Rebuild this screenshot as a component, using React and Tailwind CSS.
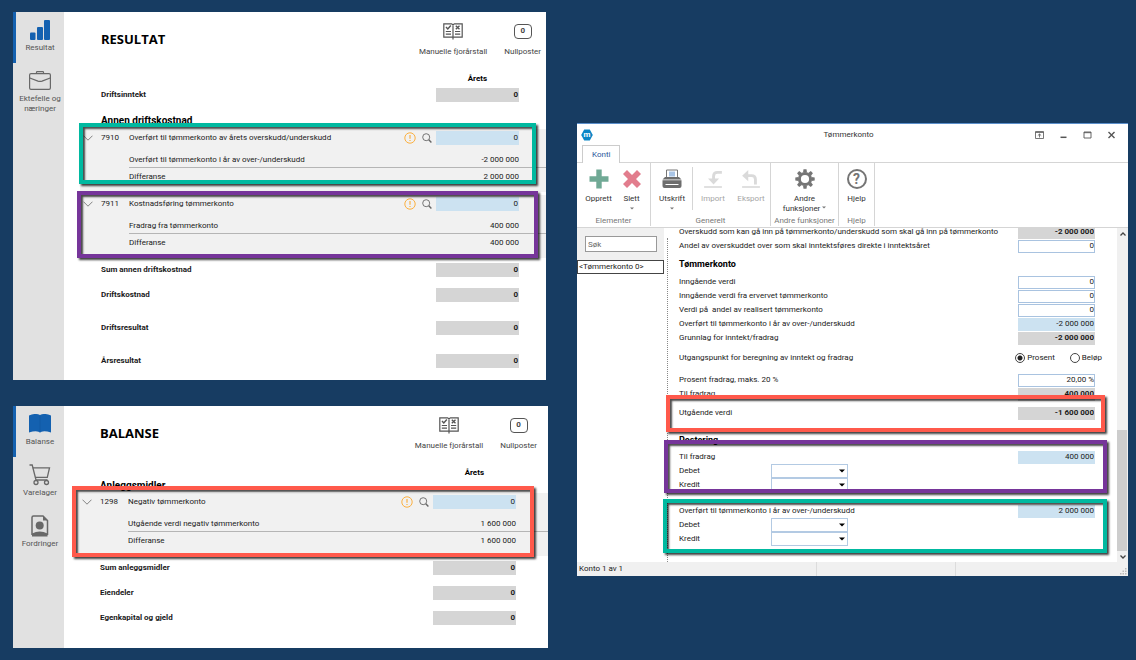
import React, { useState } from 'react';

const frameColors = {
  green: 'border-[#00b9a0]',
  purple: 'border-[#76359a]',
  red: 'border-[#ff594b]',
};

// Highlight rectangle drawn on top of a group of rows
function Frame({ color, className }) {
  return (
    <div
      className={`absolute z-10 border-4 pointer-events-none shadow-[2px_2px_2px_rgba(0,0,0,0.75),inset_2px_2px_2px_rgba(0,0,0,0.7)] ${frameColors[color]} ${className}`}
    ></div>
  );
}

/* ---------- icons ---------- */

function BarsIcon() {
  return (
    <svg viewBox="0 0 20 20" className="w-5 h-5" fill="#1461b0">
      <rect x="0" y="12.500" width="5.500" height="7.500" rx="1" />
      <rect x="7" y="7" width="6" height="13" rx="1" />
      <rect x="14" y="0" width="6" height="20" rx="1" />
    </svg>
  );
}

function BriefcaseIcon() {
  return (
    <svg viewBox="0 0 22 20" className="w-[22px] h-5" fill="none" stroke="#686868" strokeWidth="1.2">
      <rect x="0.6" y="2.6" width="20.8" height="15.8" rx="1.4" />
      <path d="M7.500 2.500V1.300Q7.500 0.600 8.300 0.600H13.700Q14.500 0.600 14.500 1.300V2.500" />
      <path d="M0.800 7L9 10.100Q11 10.800 13 10.100L21.200 7" />
    </svg>
  );
}

function OpenBookIcon() {
  return (
    <svg viewBox="0 0 22 20" className="w-[22px] h-5" fill="#1461b0">
      <path d="M0 1.500Q6 -1.300 11 1Q16 -1.300 22 1.500V18.500Q15.500 16.500 12.500 17.800Q11 19 9.500 17.800Q6.500 16.500 0 18.500Z" />
      <path d="M11 2V17" stroke="#0d4f96" strokeWidth="0.400" />
    </svg>
  );
}

function CartIcon() {
  return (
    <svg viewBox="0 0 22 22" className="w-[22px] h-[22px]" fill="none" stroke="#686868" strokeWidth="1.3">
      <path d="M0.500 1H3.200L7 16H18.500" />
      <path d="M3.800 3.800H20.500L18.300 13.300H6.300" />
      <circle cx="7" cy="18.500" r="2" />
      <circle cx="17.500" cy="18.500" r="2" />
    </svg>
  );
}

function ClaimsIcon() {
  return (
    <svg viewBox="0 0 18 22" className="w-[18px] h-[22px]">
      <path d="M1 20V2.500Q1 1 2.500 1H12L16.500 5.500V20" fill="none" stroke="#686868" strokeWidth="1.500" />
      <path d="M12 1V5.500H16.500Z" fill="#686868" />
      <circle cx="8.700" cy="10.500" r="4" fill="#686868" />
      <path d="M1 21.500V18.500Q8.700 14.500 16.500 18.500V21.500Z" fill="#686868" />
    </svg>
  );
}

function ManualBookIcon() {
  return (
    <svg viewBox="0 0 20 17" className="w-5 h-[17px]" fill="none" stroke="#555" strokeWidth="1.200">
      <path d="M10 1.500V16.500M0.800 0.800H8.500L10 1.800L11.500 0.800H19.200V14.200H0.800Z" />
      <path d="M3 4L4.800 6L7.800 2.500" strokeWidth="1.400" />
      <path d="M12.800 2.800L16.500 6.200M16.500 2.800L12.800 6.200" strokeWidth="1.400" />
      <path d="M2.800 8.500H8M2.800 11.200H8M12 8.500H17.200M12 11.200H17.200" />
    </svg>
  );
}

function ChevronIcon() {
  return (
    <svg viewBox="0 0 10 6" className="w-2.5 h-1.5" fill="none" stroke="#777" strokeWidth="0.900">
      <path d="M0.500 0.700L5 5.200L9.500 0.700" />
    </svg>
  );
}

function WarningIcon() {
  return (
    <svg viewBox="0 0 12 12" className="w-3 h-3" fill="none" stroke="#fbb040">
      <circle cx="6" cy="6" r="5.200" strokeWidth="1" />
      <path d="M6 3V6.800M6 7.900V9.100" strokeWidth="1.200" />
    </svg>
  );
}

function SearchIcon() {
  return (
    <svg viewBox="0 0 10 10" className="w-2.5 h-2.5" fill="none" stroke="#666">
      <circle cx="4.200" cy="4.200" r="3.500" strokeWidth="0.900" />
      <path d="M6.800 6.800L9.400 9.400" strokeWidth="1.400" />
    </svg>
  );
}

function LogoIcon() {
  return (
    <svg viewBox="0 0 12 12" className="w-3 h-3">
      <path d="M3.200 0.500H8.800L11.800 6L8.800 11.500H3.200L0.200 6Z" fill="#0a86c6" />
      <text x="6" y="8.200" textAnchor="middle" fontSize="8" fontWeight="700" fill="#fff">m</text>
    </svg>
  );
}

function PlusIcon() {
  return (
    <svg viewBox="0 0 20 20" className="w-5 h-5" fill="#70a995">
      <path d="M7.300 0.500H12.700V7.300H19.500V12.700H12.700V19.500H7.300V12.700H0.500V7.300H7.300Z" />
    </svg>
  );
}

function CrossIcon() {
  return (
    <svg viewBox="0 0 20 20" className="w-5 h-5" fill="#e27d8d">
      <path d="M5 1L10 6L15 1L19 5L14 10L19 15L15 19L10 14L5 19L1 15L6 10L1 5Z" />
    </svg>
  );
}

function PrinterIcon() {
  return (
    <svg viewBox="0 0 20 20" className="w-5 h-5">
      <path d="M4.500 8V1H15.500V8" fill="#fff" stroke="#777" strokeWidth="1" />
      <path d="M7 2.500H13V7.500H7Z" fill="#a9c5e6" />
      <path d="M3 8H17L19.500 10.500H0.500Z" fill="#6d6d6d" />
      <path d="M0.500 11.300H19.500V17Q19.500 19 17.500 19H2.500Q0.500 19 0.500 17Z" fill="#6d6d6d" />
      <path d="M3.500 15.500H16.500" stroke="#fff" strokeWidth="1" />
    </svg>
  );
}

function ImportIcon() {
  return (
    <svg viewBox="0 0 18 18" className="w-5 h-5" fill="none" stroke="#dadada">
      <path d="M17 3H13Q9.500 3 9.500 6.500V9" strokeWidth="2.600" />
      <path d="M4.500 8.500H14.500L9.500 14Z" fill="#dadada" stroke="none" />
      <path d="M1 16.200H17" strokeWidth="1.500" />
    </svg>
  );
}

function ExportIcon() {
  return (
    <svg viewBox="0 0 18 18" className="w-5 h-5" fill="none" stroke="#dadada">
      <path d="M5 6H9.500Q13 6 13 9.500V14" strokeWidth="2.600" />
      <path d="M6.500 1V11L1 6Z" fill="#dadada" stroke="none" />
      <path d="M1 16.200H17" strokeWidth="1.500" />
    </svg>
  );
}

function GearIcon() {
  const teeth = [0, 45, 90, 135, 180, 225, 270, 315];
  return (
    <svg viewBox="0 0 20 20" className="w-5 h-5">
      {teeth.map((angle) => (
        <path key={angle} d="M8 3.500L8.500 0.300H11.500L12 3.500Z" fill="#757575" transform={`rotate(${angle} 10 10)`} />
      ))}
      <circle cx="10" cy="10" r="5.600" fill="none" stroke="#757575" strokeWidth="3" />
    </svg>
  );
}

function SmallArrow({ className }) {
  return (
    <svg viewBox="0 0 6 4" className={className}>
      <path d="M0 0.500H6L3 3.500Z" fill="currentColor" />
    </svg>
  );
}

/* ---------- ledger panels ---------- */

function SideItem({ icon, label, active }) {
  return (
    <button
      type="button"
      className={`flex flex-col items-center w-full min-h-[51px] pt-2 pb-1 text-[8px] leading-[10px] text-[#555] border-l-[3px] ${
        active ? 'border-[#1461b0]' : 'border-transparent'
      }`}
    >
      <span className="flex justify-center items-center h-[20px] mb-[3px]">{icon}</span>
      {label}
    </button>
  );
}

function Columns({ endCol }) {
  return (
    <colgroup>
      <col className="w-[21px]" />
      <col className="w-[28px]" />
      <col />
      <col className="w-[40px]" />
      <col className="w-[83px]" />
      <col className={endCol} />
    </colgroup>
  );
}

function SumTable({ rows, endCol }) {
  return (
    <table className="w-full table-fixed border-collapse font-bold">
      <Columns endCol={endCol} />
      <tbody>
        {rows.map((row) => (
          <tr key={row.label}>
            <td></td>
            <th scope="row" colSpan={3} className={`p-0 text-left ${row.space}`}>{row.label}</th>
            <td className={`p-0 ${row.space}`}>
              <div className="bg-[#d5d5d5] text-right pr-px">0</div>
            </td>
            <td></td>
          </tr>
        ))}
      </tbody>
    </table>
  );
}

function AccountGroup({ account, endCol, className }) {
  const [value, setValue] = useState('0');
  return (
    <div className={`relative bg-[#f1f1f1] pt-[2px] pb-2 ${className}`}>
      <table className="w-full table-fixed border-collapse">
        <Columns endCol={endCol} />
        <tbody>
          <tr>
            <td className="p-0 pl-[3px]">
              <button type="button" aria-label="Vis detaljer" className="flex items-center h-[14px]">
                <ChevronIcon />
              </button>
            </td>
            <td className="p-0">{account.no}</td>
            <td className="p-0">{account.name}</td>
            <td className="p-0">
              <div className="flex items-center justify-end gap-[6px] pr-1">
                <WarningIcon />
                <button type="button" aria-label="Søk"><SearchIcon /></button>
              </div>
            </td>
            <td className="p-0">
              <input
                type="text"
                aria-label={account.name}
                value={value}
                onChange={(e) => setValue(e.target.value)}
                className="block w-full h-[14px] bg-[#cce2f1] text-right pr-px"
              />
            </td>
            <td></td>
          </tr>
          <tr>
            <td></td>
            <td></td>
            <td colSpan={2} className="p-0 pt-2 border-b border-[#b5b5b5]">{account.source}</td>
            <td className="p-0 pt-2 text-right border-b border-[#b5b5b5]">{account.sourceAmount}</td>
            <td className="border-b border-[#b5b5b5]"></td>
          </tr>
          <tr>
            <td></td>
            <td></td>
            <td colSpan={2} className="p-0 pt-[2px]">Differanse</td>
            <td className="p-0 pt-[2px] text-right">{account.diff}</td>
            <td></td>
          </tr>
        </tbody>
      </table>
      <Frame color={account.color} className={account.frame} />
    </div>
  );
}

function PanelHeader({ title, className }) {
  return (
    <header className={`flex justify-between pt-2 text-[8px] leading-[14px] ${className}`}>
      <h1 className="pt-[9px] font-['Open_Sans','Noto_Sans',sans-serif] text-[13px] leading-5 font-bold text-black">{title}</h1>
      <div className="flex gap-[17px] text-[#444]">
        <button type="button" className="flex flex-col items-center">
          <span className="flex items-center h-[22px] mb-[3px]"><ManualBookIcon /></span>
          Manuelle fjorårstall
        </button>
        <button type="button" className="flex flex-col items-center">
          <span className="flex items-center h-[22px] mb-[3px]">
            <span className="flex items-center justify-center w-[18px] h-[15px] rounded-sm border border-[#555] font-bold">0</span>
          </span>
          Nullposter
        </button>
      </div>
    </header>
  );
}

const annenDriftskostnad = [
  {
    no: '7910',
    name: 'Overført til tømmerkonto av årets overskudd/underskudd',
    source: 'Overført til tømmerkonto i år av over-/underskudd',
    sourceAmount: '-2 000 000',
    diff: '2 000 000',
    color: 'green',
    frame: '-left-px right-2.5 -top-[6px] bottom-2',
  },
  {
    no: '7911',
    name: 'Kostnadsføring tømmerkonto',
    source: 'Fradrag fra tømmerkonto',
    sourceAmount: '400 000',
    diff: '400 000',
    color: 'purple',
    frame: '-left-[3px] right-2 -top-1 bottom-0',
  },
];

const negativTommerkonto = {
  no: '1298',
  name: 'Negativ tømmerkonto',
  source: 'Utgående verdi negativ tømmerkonto',
  sourceAmount: '1 600 000',
  diff: '1 600 000',
  color: 'red',
  frame: '-left-1 right-3.5 -top-[7px] -bottom-px',
};

function ResultPanel() {
  return (
    <section className="flex mr-0.5 bg-white">
      <nav className="w-[51px] shrink-0 bg-[#e1e1e1]">
        <SideItem active icon={<BarsIcon />} label="Resultat" />
        <SideItem icon={<BriefcaseIcon />} label="Ektefelle og næringer" />
      </nav>
      <div className="grow min-w-0 pb-3">
        <PanelHeader title="RESULTAT" className="pl-[37px] pr-[5px]" />
        <div className="pt-[13px] pr-[59px] text-right font-bold text-black">Årets</div>
        <div className="pl-4">
          <SumTable endCol="w-[27px]" rows={[{ label: 'Driftsinntekt', space: 'pt-[2px]' }]} />
        </div>
        <h2 className="pt-3 pl-[37px] h-[27px] text-[10px] font-bold text-black">Annen driftskostnad</h2>
        <AccountGroup account={annenDriftskostnad[0]} endCol="w-[27px]" className="ml-4" />
        <AccountGroup account={annenDriftskostnad[1]} endCol="w-[27px]" className="ml-4 mt-[3px]" />
        <div className="pl-4">
          <SumTable
            endCol="w-[27px]"
            rows={[
              { label: 'Sum annen driftskostnad', space: 'pt-[5px]' },
              { label: 'Driftskostnad', space: 'pt-[11px]' },
              { label: 'Driftsresultat', space: 'pt-[19px]' },
              { label: 'Årsresultat', space: 'pt-[19px]' },
            ]}
          />
        </div>
      </div>
    </section>
  );
}

function BalancePanel() {
  return (
    <section className="flex mt-[26px] bg-white">
      <nav className="w-[51px] shrink-0 bg-[#e1e1e1]">
        <SideItem active icon={<OpenBookIcon />} label="Balanse" />
        <SideItem icon={<CartIcon />} label="Varelager" />
        <SideItem icon={<ClaimsIcon />} label="Fordringer" />
      </nav>
      <div className="grow min-w-0 pb-[23px]">
        <PanelHeader title="BALANSE" className="pl-9 pr-[11px]" />
        <div className="pt-[13px] pr-16 text-right font-bold text-black">Årets</div>
        <h2 className="pl-9 h-[13px] text-[10px] leading-3 font-bold text-black">Anleggsmidler</h2>
        <AccountGroup account={negativTommerkonto} endCol="w-[32px]" className="ml-3 pl-[3px]" />
        <div className="pl-[15px]">
          <SumTable
            endCol="w-[32px]"
            rows={[
              { label: 'Sum anleggsmidler', space: 'pt-[5px]' },
              { label: 'Eiendeler', space: 'pt-[11px]' },
              { label: 'Egenkapital og gjeld', space: 'pt-[11px]' },
            ]}
          />
        </div>
      </div>
    </section>
  );
}

/* ---------- Tømmerkonto window ---------- */

function RibbonButton({ icon, label, arrow, disabled, className }) {
  return (
    <button
      type="button"
      disabled={disabled}
      className={`flex flex-col items-center pt-[6px] leading-[10px] ${disabled ? 'text-[#a5a5a5]' : 'text-[#333]'} ${className}`}
    >
      <span className="flex items-center h-5 mb-[5px]">{icon}</span>
      <span>{label}</span>
      {arrow && <SmallArrow className="w-1 h-[3px] mt-[3px] text-[#777]" />}
    </button>
  );
}

function RibbonGroup({ title, children, className }) {
  return (
    <div className={`flex flex-col justify-between border-r border-[#d5d5d5] mb-px ${className}`}>
      <div className="flex justify-center">{children}</div>
      <div className="text-center leading-[10px] text-[#777] whitespace-nowrap">{title}</div>
    </div>
  );
}

const fieldStyles = {
  edit: 'bg-white border border-[#a9c3e0]',
  blue: 'bg-[#cce2f1] border border-[#cce2f1]',
  sum: 'bg-[#d5d5d5] border border-[#d5d5d5] font-bold',
};

function FormRow({ label, value, kind, className = '' }) {
  const [text, setText] = useState(value);
  return (
    <label className={`flex items-center justify-between pl-[15px] pr-[22px] ${className}`}>
      <span className="whitespace-pre">{label}</span>
      <input
        type="text"
        value={text}
        readOnly={kind !== 'edit'}
        onChange={(e) => setText(e.target.value)}
        className={`w-[77px] h-[13px] my-auto text-right ${fieldStyles[kind]}`}
      />
    </label>
  );
}

function AccountSelect({ label }) {
  return (
    <label className="flex items-center pl-[15px]">
      <span className="w-[92px]">{label}</span>
      <span className="relative block">
        <select className="block appearance-none w-[77px] h-[14px] bg-white border border-[#b3cae3]">
          <option></option>
        </select>
        <SmallArrow className="absolute right-[3px] top-[5px] w-[6px] h-1 text-black pointer-events-none" />
      </span>
    </label>
  );
}

function TimberForm() {
  const [basis, setBasis] = useState('prosent');
  const radio = 'appearance-none w-[10px] h-[10px] mr-[2px] rounded-full border border-[#444] checked:bg-[radial-gradient(circle,#222_0_2px,#fff_3px)]';
  return (
    <form className="grow min-w-0 pb-4 overflow-y-clip">
      <FormRow
        label="Overskudd som kan gå inn på tømmerkonto/underskudd som skal gå inn på tømmerkonto"
        value="-2 000 000"
        kind="sum"
        className="-mt-[3px]"
      />
      <FormRow label="Andel av overskuddet over som skal inntektsføres direkte i inntektsåret" value="0" kind="edit" />
      <h2 className="pl-[15px] pt-1 pb-1 text-[9px] font-bold text-black">Tømmerkonto</h2>
      <FormRow label="Inngående verdi" value="0" kind="edit" />
      <FormRow label="Inngående verdi fra ervervet tømmerkonto" value="0" kind="edit" />
      <FormRow label="Verdi på  andel av realisert tømmerkonto" value="0" kind="edit" />
      <FormRow label="Overført til tømmerkonto i år av over-/underskudd" value="-2 000 000" kind="blue" />
      <FormRow label="Grunnlag for inntekt/fradrag" value="-2 000 000" kind="sum" />
      <fieldset className="flex items-center justify-between pt-[6px] pb-2 pl-[15px] pr-[15px]">
        <span>Utgangspunkt for beregning av inntekt og fradrag</span>
        <span className="flex gap-[15px]">
          <label className="flex items-center">
            <input
              type="radio"
              name="basis"
              checked={basis === 'prosent'}
              onChange={() => setBasis('prosent')}
              className={radio}
            />
            Prosent
          </label>
          <label className="flex items-center">
            <input
              type="radio"
              name="basis"
              checked={basis === 'belop'}
              onChange={() => setBasis('belop')}
              className={radio}
            />
            Beløp
          </label>
        </span>
      </fieldset>
      <FormRow label="Prosent fradrag, maks. 20 %" value="20,00 %" kind="edit" />
      <FormRow label="Til fradrag" value="400 000" kind="sum" />
      <div className="relative mt-[5px]">
        <FormRow label="Utgående verdi" value="-1 600 000" kind="sum" />
        <Frame color="red" className="left-0.5 right-3 -top-[11px] -bottom-3" />
      </div>
      <h2 className="pl-[15px] pt-[13px] pb-[3px] text-[9px] font-bold text-black">Postering</h2>
      <div className="relative">
        <FormRow label="Til fradrag" value="400 000" kind="blue" />
        <AccountSelect label="Debet" />
        <AccountSelect label="Kredit" />
        <Frame color="purple" className="left-0 right-2.5 -top-[10px] -bottom-px" />
      </div>
      <div className="relative mt-3">
        <FormRow label="Overført til tømmerkonto i år av over-/underskudd" value="2 000 000" kind="blue" />
        <AccountSelect label="Debet" />
        <AccountSelect label="Kredit" />
        <Frame color="green" className="-left-px right-2.5 -top-[5px] -bottom-[7px]" />
      </div>
    </form>
  );
}

function TimberWindow() {
  return (
    <section className="mt-[111px] bg-white border-t border-[#5b8fcb]">
      <div className="flex items-center h-[21px] px-1">
        <div className="flex-1"><LogoIcon /></div>
        <h1 className="text-[#333]">Tømmerkonto</h1>
        <div className="flex flex-1 justify-end items-center gap-[15px] pr-2 text-[#555]">
          <button type="button" aria-label="Skjul bånd">
            <svg viewBox="0 0 9 8" className="w-[9px] h-2" fill="none" stroke="currentColor" strokeWidth="0.800">
              <path d="M0.500 0.500H8.500V7.500H0.500ZM0.500 1.500H8.500M4.500 6.500V3M2.800 4.600L4.500 3L6.200 4.600" />
            </svg>
          </button>
          <button type="button" aria-label="Minimer">
            <svg viewBox="0 0 9 8" className="w-[9px] h-2" stroke="currentColor" strokeWidth="1.500">
              <path d="M1.500 6.300H7.500" />
            </svg>
          </button>
          <button type="button" aria-label="Maksimer">
            <svg viewBox="0 0 9 8" className="w-[9px] h-2" fill="none" stroke="currentColor" strokeWidth="0.900">
              <path d="M1 1H8V7H1ZM1 1.700H8" />
            </svg>
          </button>
          <button type="button" aria-label="Lukk">
            <svg viewBox="0 0 9 8" className="w-[9px] h-2" stroke="currentColor" strokeWidth="1.400">
              <path d="M1.500 1L7.500 7M7.500 1L1.500 7" />
            </svg>
          </button>
        </div>
      </div>

      <div className="flex h-[18px] pl-[5px] border-b border-[#d5d5d5]">
        <button type="button" className="px-[9px] h-[18px] bg-white border border-b-0 border-[#ccc] text-[#2b579a]">
          Konti
        </button>
      </div>

      <div className="flex min-h-[65px] border-b border-[#d5d5d5]">
        <RibbonGroup title="Elementer" className="w-[74px]">
          <RibbonButton icon={<PlusIcon />} label="Opprett" className="w-9" />
          <RibbonButton icon={<CrossIcon />} label="Slett" arrow className="w-[30px]" />
        </RibbonGroup>
        <RibbonGroup title="Generelt" className="w-[120px]">
          <RibbonButton icon={<PrinterIcon />} label="Utskrift" arrow className="w-[40px]" />
          <span className="w-px mt-1 bg-[#d5d5d5]"></span>
          <RibbonButton icon={<ImportIcon />} label="Import" disabled className="w-[40px]" />
          <RibbonButton icon={<ExportIcon />} label="Eksport" disabled className="w-[36px]" />
        </RibbonGroup>
        <RibbonGroup title="Andre funksjoner" className="w-[68px]">
          <RibbonButton
            icon={<GearIcon />}
            label={<>Andre<br />funksjoner <SmallArrow className="inline w-1 h-[3px] mb-[2px] text-[#777]" /></>}
          />
        </RibbonGroup>
        <RibbonGroup title="Hjelp" className="w-9">
          <RibbonButton
            icon={<span className="w-5 h-5 rounded-full border-2 border-[#757575] text-[14px] leading-4 font-bold text-[#757575]">?</span>}
            label="Hjelp"
          />
        </RibbonGroup>
      </div>

      <div className="flex">
        <aside className="w-[87px] shrink-0">
          <div className="pt-2 pb-2 pl-2 pr-[7px] bg-[#f0f0f0]">
            <input
              type="text"
              aria-label="Søk"
              placeholder="Søk"
              className="block w-full h-4 px-[2px] bg-white border border-[#999] placeholder:text-[#666]"
            />
          </div>
          <button type="button" className="block w-full pl-px text-left leading-3 border border-[#444]">
            &lt;Tømmerkonto 0&gt;
          </button>
        </aside>
        <div className="relative flex grow min-w-0">
          <div className="absolute left-[3px] top-[10px] bottom-0 border-l border-dotted border-[#888]"></div>
          <TimberForm />
        </div>
        <div className="flex flex-col w-[11px] shrink-0 bg-[#f0f0f0]">
          <button type="button" aria-label="Rull opp" className="flex items-center justify-center h-3">
            <svg viewBox="0 0 6 4" className="w-[6px] h-1" fill="none" stroke="#444" strokeWidth="1.300"><path d="M0.500 3.500L3 1L5.500 3.500" /></svg>
          </button>
          <div className="flex flex-col justify-end grow">
            <div className="h-[39%] mr-px bg-[#cdcdcd]"></div>
          </div>
          <button type="button" aria-label="Rull ned" className="flex items-center justify-center h-[11px]">
            <svg viewBox="0 0 6 4" className="w-[6px] h-1" fill="none" stroke="#444" strokeWidth="1.300"><path d="M0.500 0.500L3 3L5.500 0.500" /></svg>
          </button>
        </div>
      </div>

      <footer className="flex bg-[#f0f0f0]">
        <span className="w-[240px] pl-[2px] border-r border-[#dcdcdc]">Konto 1 av 1</span>
        <span className="w-[139px] border-r border-[#dcdcdc]"></span>
        <span className="flex items-end justify-end grow">
          <svg viewBox="0 0 8 8" className="w-2 h-2" fill="#bbb">
            <path d="M5 0H6.500V1.500H5ZM5 2.500H6.500V4H5ZM5 5H6.500V6.500H5ZM2.500 2.500H4V4H2.500ZM2.500 5H4V6.500H2.500ZM0 5H1.500V6.500H0Z" />
          </svg>
        </span>
      </footer>
    </section>
  );
}

export default function App() {
  return (
    <main className="grid grid-cols-[535fr_551fr] items-start gap-[29px] min-h-screen pt-3 pb-3 pl-[13px] pr-2 bg-[#173c62] font-[Roboto,'Open_Sans',sans-serif] text-[8px] leading-[14px] text-[#1a1a1a]">
      <div>
        <ResultPanel />
        <BalancePanel />
      </div>
      <TimberWindow />
    </main>
  );
}
